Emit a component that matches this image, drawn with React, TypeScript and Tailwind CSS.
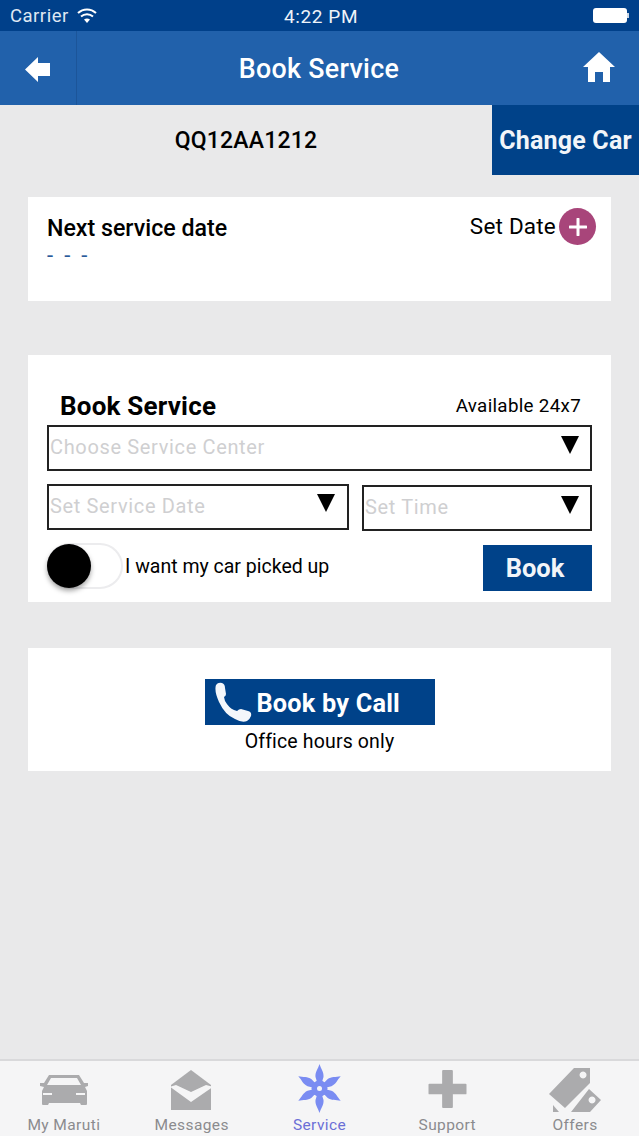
import type { ReactNode } from 'react'

function Caret({ className }: { className: string }) {
  return (
    <svg viewBox="0 0 20 20" className={className} aria-hidden="true">
      <path d="M1 1h18L10 19z" fill="#000" />
    </svg>
  )
}

function Picker({ label, className, caretClass }: { label: string; className: string; caretClass: string }) {
  return (
    <div className={`flex border-2 border-[#222] bg-white pl-[1px] ${className}`}>
      <span className="mt-[6px] text-[20px] leading-[28px] tracking-[0.65px] text-[#cfcfd1]">{label}</span>
      <Caret className={`ml-auto h-[20px] w-[20px] ${caretClass}`} />
    </div>
  )
}

function CarIcon() {
  return (
    <svg viewBox="0 0 50 31" className="h-[31px] w-[50px]" aria-hidden="true">
      <path
        fill="#ababad"
        fillRule="evenodd"
        d="M10 0h30l5 8h4v3l-3 1 2 4v13q0 1-1 1h-5l-1-2H10l-1 2H4q-1 0-1-1V16l2-4-4-1V8h4zm2 3L8 10h34l-4-7zM4 18v2h9v-2zm33 0v2h9v-2z"
      />
    </svg>
  )
}

function EnvelopeIcon() {
  return (
    <svg viewBox="0 0 41 40" className="h-[40px] w-[41px]" aria-hidden="true">
      <path fill="#ababad" d="M20 0l20 15v25H0V15z" />
      <path fill="#f5f5f6" d="M0 16.5L5 15l15 7 15-7 6 1.5v1L20 32 0 17.5z" />
    </svg>
  )
}

function ServiceIcon() {
  const arm = 'M21.5 0C23 5 26 8 25.5 13L24 18H19L17.5 13C17 8 20 5 21.5 0z'
  return (
    <svg viewBox="0 0 43 49" className="h-[49px] w-[43px]" aria-hidden="true">
      <g fill="#7a8cf2">
        {[0, 60, 120, 180, 240, 300].map((deg) => (
          <path key={deg} d={arm} transform={`rotate(${deg} 21.5 24.5)`} />
        ))}
        <circle cx="21.5" cy="24.5" r="8" />
      </g>
      <circle cx="21.5" cy="24.5" r="2.5" fill="#f5f5f6" />
    </svg>
  )
}

function PlusIcon() {
  return (
    <svg viewBox="0 0 39 39" className="h-[38px] w-[39px]" aria-hidden="true">
      <path fill="#ababad" d="M14 1q0-1 1-1h9q1 0 1 1v13h13q1 0 1 1v9q0 1-1 1H25v13q0 1-1 1h-9q-1 0-1-1V25H1q-1 0-1-1v-9q0-1 1-1h13z" />
    </svg>
  )
}

function TagsIcon() {
  return (
    <svg viewBox="0 0 52 44" className="h-[44px] w-[52px]" aria-hidden="true">
      <path fill="#ababad" fillRule="evenodd" d="M25 0h16v15L16 40 0 26zM34 3.5a3.5 3.5 0 1 0 .1 0z" />
      <path fill="#ababad" fillRule="evenodd" d="M40 21l12 11-11 12H22zM43 28.5a3.5 3.5 0 1 0 .1 0z" />
      <path fill="#ababad" d="M4 37l6 7H4z" />
    </svg>
  )
}

function TabItem({ label, active, icon }: { label: string; active?: boolean; icon: ReactNode }) {
  return (
    <div className="flex flex-col items-center">
      <div className="flex h-[52px] items-end justify-center">{icon}</div>
      <span className={`mt-[2px] text-[15.5px] leading-[20px] tracking-[0.4px] ${active ? 'text-[#6b6fd6]' : 'text-[#8b8b8e]'}`}>{label}</span>
    </div>
  )
}

export default function App() {
  return (
    <div className='flex h-[1136px] w-[639px] flex-col overflow-hidden bg-[#e9e9ea] font-["Roboto",sans-serif]'>
      {/* status bar */}
      <div className="relative flex h-[31px] items-center bg-[#00408a] px-[10px] text-white">
        <span className="mt-[2px] text-[18.5px] tracking-[0.5px] text-[#dfe8f3]">Carrier</span>
        <svg viewBox="0 0 20 15" className="ml-[8px] h-[15px] w-[20px]" aria-hidden="true">
          <path d="M1 5a13 13 0 0 1 18 0" fill="none" stroke="#fff" strokeWidth="2" />
          <path d="M4 8.5a9 9 0 0 1 12 0" fill="none" stroke="#fff" strokeWidth="2" />
          <path d="M7 11.5a5 5 0 0 1 6 0L10 15z" fill="#fff" />
        </svg>
        <span className="absolute left-[284px] top-[3px] text-[19px] tracking-[0.6px] text-[#eef3f9]">4:22 PM</span>
        <div className="ml-auto flex items-center">
          <div className="h-[15px] w-[34px] rounded-[3px] bg-white" />
          <div className="h-[5px] w-[2px] bg-[#cdd9e8]" />
        </div>
      </div>

      {/* nav bar */}
      <div className="flex h-[74px] items-center bg-[#2161ab]">
        <div className="flex h-full w-[77px] items-center justify-center border-r border-[#1c5599] pt-[3px]">
          <svg viewBox="0 0 25 25" className="ml-[-2px] h-[25px] w-[25px]" aria-hidden="true">
            <path fill="#fff" d="M13 0L0 12.5 13 25V19H25V6H13z" />
          </svg>
        </div>
        <span className="mt-[2px] flex-1 pr-[22px] text-center text-[26.8px] font-medium tracking-[0.3px] text-white">Book Service</span>
        <svg viewBox="0 0 32 30" className="mr-[24px] mb-[2px] h-[30px] w-[32px]" aria-hidden="true">
          <path fill="#fff" d="M16 0l16 15h-5v15h-7V20h-8v10H5V15H0z" />
        </svg>
      </div>

      {/* car row */}
      <div className="flex h-[70px] items-stretch">
        <span className="flex-1 pt-[22px] text-center text-[23px] leading-[28px] font-medium tracking-[0.2px] text-black">QQ12AA1212</span>
        <div className="flex w-[147px] items-center justify-center bg-[#004289] pt-[2px] text-[25px] font-bold tracking-[0.2px] text-[#f2f5f9]">Change Car</div>
      </div>

      {/* next service card */}
      <div className="mx-[28px] mt-[22px] h-[104px] bg-white pl-[19px] pr-[15px] pt-[11px]">
        <div className="flex items-start">
          <span className="mt-[5px] text-[23.2px] leading-[30px] font-medium text-black">Next service date</span>
          <span className="mt-[3px] ml-auto text-[22.5px] leading-[30px] tracking-[0.2px] text-black">Set Date</span>
          <div className="ml-[3px] flex h-[37px] w-[37px] items-center justify-center rounded-full bg-[#a8457a]">
            <svg viewBox="0 0 18 18" className="h-[18px] w-[18px]" aria-hidden="true">
              <path d="M9 1v16M1 9h16" stroke="#fff" strokeWidth="3" strokeLinecap="round" />
            </svg>
          </div>
        </div>
        <div className="mt-[-1px] text-[22px] leading-[24px] tracking-[2.8px] text-[#2a5a9a]">- - -</div>
      </div>

      {/* booking card */}
      <div className="mx-[28px] mt-[54px] flex h-[247px] flex-col bg-white pl-[19px] pr-[19px]">
        <div className="mt-[34px] flex h-[36px] items-center pl-[13px]">
          <span className="mt-[-2px] text-[26px] font-bold tracking-[0.2px] text-black">Book Service</span>
          <span className="ml-auto mr-[11px] mt-[-2px] text-[18.8px] tracking-[0.3px] text-black">Available 24x7</span>
        </div>
        <Picker label="Choose Service Center" className="h-[46px]" caretClass="mr-[10px] mt-[8px]" />
        <div className="mt-[13px] flex items-start">
          <Picker label="Set Service Date" className="h-[46px] w-[302px]" caretClass="mr-[11px] mt-[7px]" />
          <Picker label="Set Time" className="ml-[13px] mt-[1px] h-[46px] flex-1" caretClass="mr-[10px] mt-[8px]" />
        </div>
        <div className="mt-[13px] flex items-start">
          <div className="relative mt-[-1px] h-[46px] w-[76px] rounded-full border-2 border-[#ececee] bg-white">
            <div className="absolute top-[-1px] left-[-2px] h-[44px] w-[44px] rounded-full bg-black shadow-[0_3px_5px_rgba(0,0,0,0.35)]" />
          </div>
          <span className="ml-[2px] mt-[9px] text-[19.5px] leading-[28px] text-black">I want my car picked up</span>
          <div className="ml-auto mt-[1px] flex h-[46px] w-[109px] items-center justify-center bg-[#004289] pr-[5px] pt-[1px] text-[25.5px] font-bold text-[#f2f5f9]">Book</div>
        </div>
      </div>

      {/* call card */}
      <div className="mx-[28px] mt-[46px] flex h-[123px] flex-col items-center bg-white pt-[31px]">
        <div className="flex h-[46px] w-[230px] items-center bg-[#004289] pl-[8px] text-white">
          <svg viewBox="0 0 40 40" className="h-[40px] w-[40px]" aria-hidden="true">
            <path fill="#f4f7fb" d="M3 3q2-3 6-2 3 1 3 5l1 6q0 2-2 3l1 4q4 7 9 9l3 1q2-2 4-2l7 2q4 1 3 5-1 3-4 5-5 2-12-2Q12 33 6 20 1 9 3 3z" />
          </svg>
          <span className="ml-[4px] mt-[4px] text-[25.3px] font-bold tracking-[0.2px]">Book by Call</span>
        </div>
        <span className="mt-[3px] text-[19.5px] leading-[28px] tracking-[0.15px] text-black">Office hours only</span>
      </div>

      {/* tab bar */}
      <div className="mt-auto grid h-[77px] grid-cols-5 border-t-2 border-[#d9d9db] bg-[#f5f5f6]">
        <TabItem label="My Maruti" icon={<div className="mb-[7px] flex"><CarIcon /></div>} />
        <TabItem label="Messages" icon={<div className="mb-[3px] flex"><EnvelopeIcon /></div>} />
        <TabItem label="Service" active icon={<div className="flex"><ServiceIcon /></div>} />
        <TabItem label="Support" icon={<div className="mb-[5px] flex"><PlusIcon /></div>} />
        <TabItem label="Offers" icon={<div className="mb-[1px] flex"><TagsIcon /></div>} />
      </div>
    </div>
  )
}
